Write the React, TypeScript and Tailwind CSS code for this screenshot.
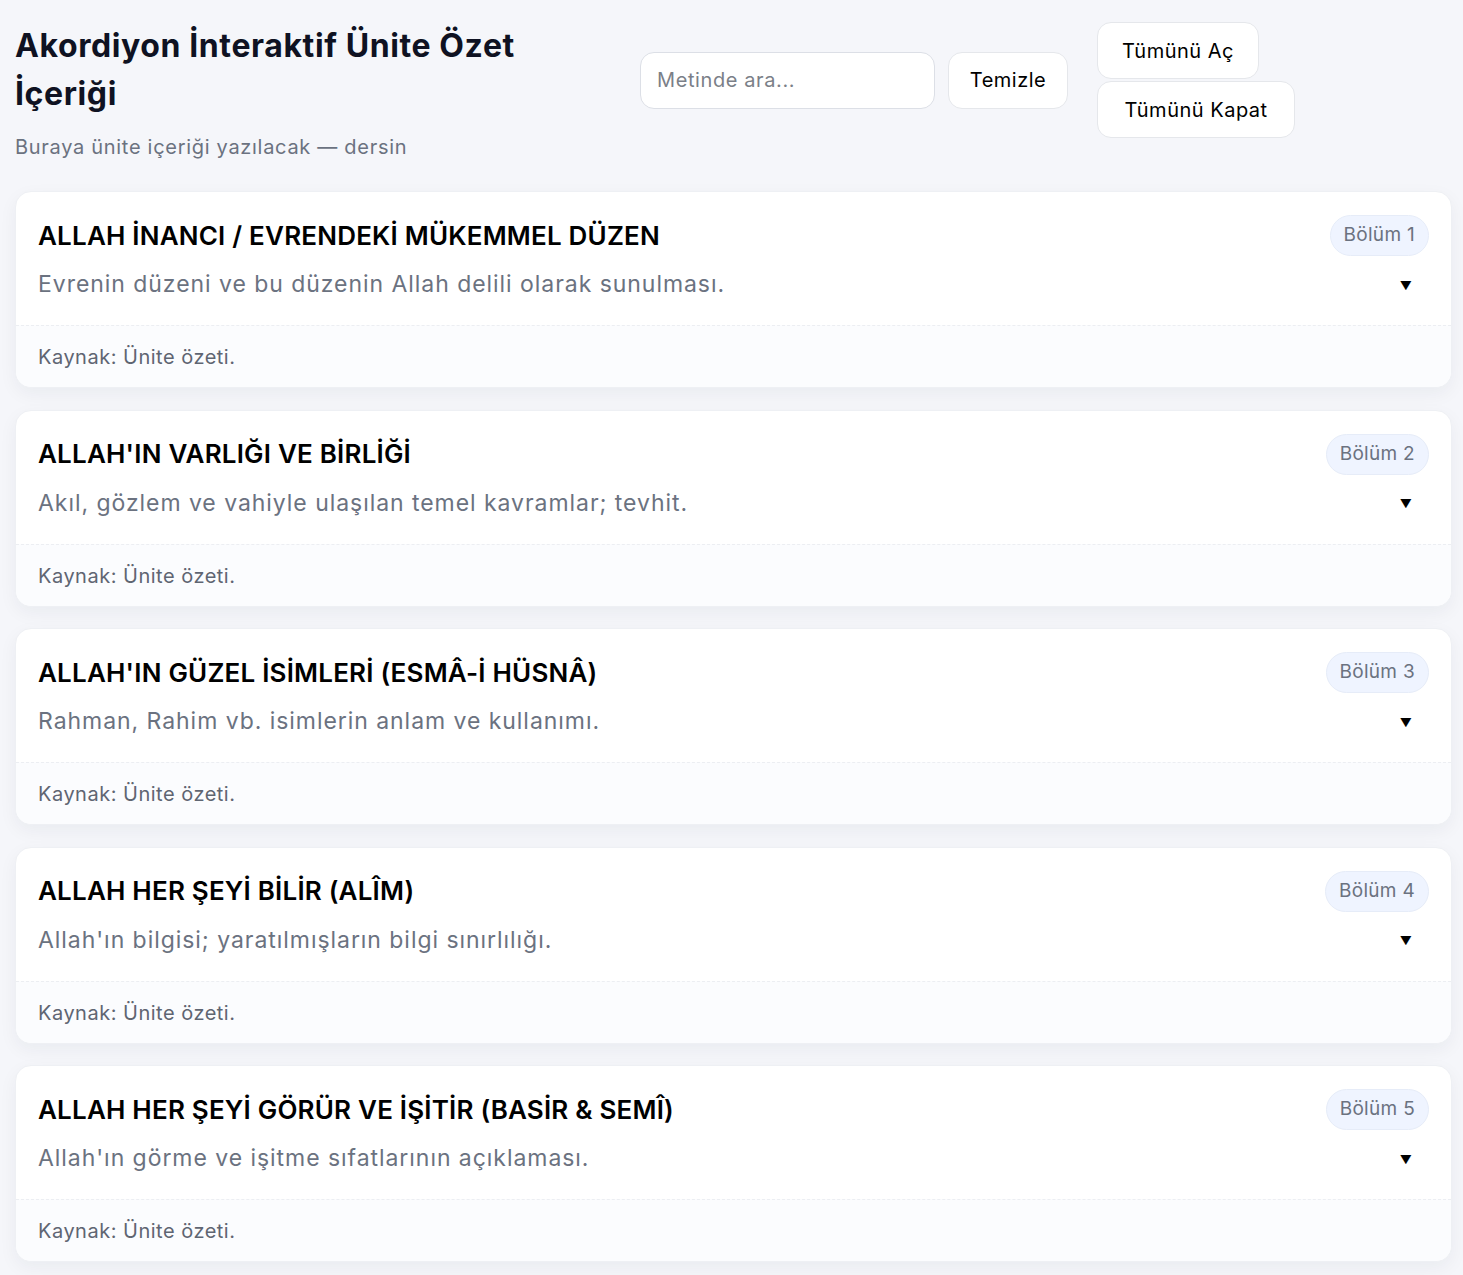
import { useState } from 'react'

const SECTIONS = [
  { title: 'ALLAH İNANCI / EVRENDEKİ MÜKEMMEL DÜZEN', desc: 'Evrenin düzeni ve bu düzenin Allah delili olarak sunulması.' },
  { title: "ALLAH'IN VARLIĞI VE BİRLİĞİ", desc: 'Akıl, gözlem ve vahiyle ulaşılan temel kavramlar; tevhit.' },
  { title: "ALLAH'IN GÜZEL İSİMLERİ (ESMÂ-İ HÜSNÂ)", desc: 'Rahman, Rahim vb. isimlerin anlam ve kullanımı.' },
  { title: 'ALLAH HER ŞEYİ BİLİR (ALÎM)', desc: "Allah'ın bilgisi; yaratılmışların bilgi sınırlılığı." },
  { title: 'ALLAH HER ŞEYİ GÖRÜR VE İŞİTİR (BASİR & SEMÎ)', desc: "Allah'ın görme ve işitme sıfatlarının açıklaması." },
]

export default function App() {
  const [query, setQuery] = useState('')

  return (
    <div className="min-h-screen bg-[#f5f6fa] pl-[15px] pr-[11px] pt-[22px] pb-4 font-['Inter',sans-serif] text-[#111827]">
      <header className="flex items-start">
        <div className="w-[600px] shrink-0">
          <h1 className="w-[545px] text-[32px] font-bold leading-[48px] tracking-[0.6px] text-[#0f1222]">Akordiyon İnteraktif Ünite Özet İçeriği</h1>
          <p className="mt-[14px] text-[20px] leading-[30px] tracking-[0.7px] text-[#6b7280]">Buraya ünite içeriği yazılacak — dersin</p>
        </div>
        <div className="ml-[25px] flex items-center">
          <input
            value={query}
            onChange={e => setQuery(e.target.value)}
            placeholder="Metinde ara..."
            className="h-[57px] w-[295px] rounded-[14px] border border-[#dcdfe6] bg-white px-4 text-[20px] tracking-[0.6px] text-[#111827] placeholder:text-[#7b7f88] outline-none"
          />
          <button className="ml-[13px] h-[57px] w-[120px] rounded-[14px] border border-[#e5e7eb] bg-white text-[20px] tracking-[0.5px] text-black">Temizle</button>
          <div className="ml-[29px] flex flex-col items-start gap-[2px]">
            <button className="h-[57px] w-[162px] rounded-[14px] border border-[#e5e7eb] bg-white text-[20px] tracking-[0.5px] text-black">Tümünü Aç</button>
            <button className="h-[57px] w-[198px] rounded-[14px] border border-[#e5e7eb] bg-white text-[20px] tracking-[0.5px] text-black">Tümünü Kapat</button>
          </div>
        </div>
      </header>

      <div className="mt-[29px] flex flex-col gap-[21.5px]">
        {SECTIONS.map((s, i) => (
          <div key={i} className="overflow-hidden rounded-[16px] border border-[#eef0f4] bg-white shadow-[0_6px_18px_rgba(20,30,60,0.05)]">
            <div className="px-[22px] pt-[23px] pb-[23px]">
              <div className="flex h-[41px] items-center justify-between">
                <h2 className="text-[26px] font-semibold leading-[36px] tracking-[0.2px] text-black">{s.title}</h2>
                <span className="flex h-[41px] items-center rounded-full border border-[#e6ecf8] bg-[#eff4ff] px-[13px] text-[19px] tracking-[0.3px] text-[#6b7280]">Bölüm {i + 1}</span>
              </div>
              <div className="mt-[10px] flex h-[36px] items-center justify-between">
                <p className="text-[23px] leading-[36px] tracking-[0.95px] text-[#6b7280]">{s.desc}</p>
                <span className="mr-[17px] mt-[3px] text-[12px] text-black">▼</span>
              </div>
            </div>
            <div className="border-t border-dashed border-[#eceef2] bg-[#fbfcfe] px-[22px] pt-[16px] pb-[15px] text-[20px] leading-[30px] tracking-[0.5px] text-[#5f6572]">Kaynak: Ünite özeti.</div>
          </div>
        ))}
      </div>
    </div>
  )
}
